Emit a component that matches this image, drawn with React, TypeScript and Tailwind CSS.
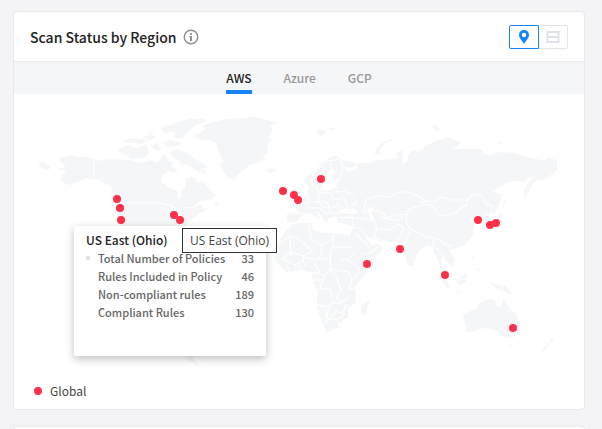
import { useState } from "react";

const tabs = ["AWS", "Azure", "GCP"];

const policyRows = [
  { label: "Total Number of Policies", value: 33 },
  { label: "Rules Included in Policy", value: 46 },
  { label: "Non-compliant rules", value: 189 },
  { label: "Compliant Rules", value: 130 },
];

const regions = [
  [117, 199], [120, 208], [121, 220], [174, 215], [180, 220],
  [283, 191], [294, 195], [298, 200], [321, 179], [367, 264],
  [400, 249], [445, 275], [478, 220], [490, 225], [496, 223], [513, 328],
];

const land = [
  // north america
  "M59 159L63 157L67 157L71 155L77 157L85 157L94 159L102 161L106 159L112 160L117 159L124 160L130 160L136 162L140 163L146 162L152 161L156 163L160 161L162 156L165 155L168 161L173 163L171 168L167 172L162 175L161 182L165 184L168 187L175 190L178 192L177 197L179 200L182 197L181 192L185 188L186 178L192 177L196 179L198 183L203 180L205 184L210 190L216 195L212 199L207 200L198 202L193 208L199 205L203 206L202 209L208 208L205 211L199 213L195 217L188 222L185 227L183 233L174 241L174 255L169 244L158 244L146 246L144 257L151 262L157 261L154 268L165 280L175 285L170 286L150 272L137 267L126 244L121 230L118 217L119 203L113 194L111 187L107 184L102 182L98 179L93 180L86 178L80 180L77 182L73 183L68 187L63 190L70 185L66 184L60 179L62 177L60 175L64 174L66 170L60 170L58 168L63 168L66 165L61 163Z",
  // south america
  "M175 285L188 281L200 289L207 297L224 306L220 326L208 334L201 345L197 352L193 363L187 358L185 325L174 310L171 297Z M192 357L197 364L201 367L195 365Z",
  // greenland
  "M193 137L201 132L206 129L202 126L212 122L220 121L226 119L242 118L256 117L266 120L280 123L271 125L272 131L269 137L271 141L267 146L268 153L262 157L266 159L257 163L250 165L242 171L237 175L234 180L229 178L224 173L220 165L223 160L219 153L217 144L210 140L202 140Z",
  "M266 170L269 168L277 169L275 172L270 173Z",
  // arctic archipelago
  "M170 126L177 122L190 119L204 119L207 121L196 125L188 132L182 138L173 138L176 133L170 131Z M161 128L166 125L173 126L172 131L165 133Z M147 133L154 131L151 134Z M142 138L150 134L156 137L151 140Z M118 151L122 147L129 145L136 148L146 145L149 153L144 158L131 159L126 155Z M122 142L131 138L140 139L147 140L142 144L132 143Z M151 146L157 143L161 148L158 152Z M162 142L170 140L181 143L179 146L167 146Z M171 152L177 149L183 151L189 154L195 159L202 163L208 167L203 169L207 174L200 173L193 168L188 165L181 165L179 160L173 158Z M166 169L173 167L178 171L172 173Z",
  "M39 162L45 163L51 168L47 170L40 167Z M214 205L216 202L220 205Z",
  // eurasia
  "M306 180L307 176L315 172L320 164L327 159L335 156L340 157L342 160L353 162L357 165L350 168L344 167L348 172L352 171L357 168L357 163L362 163L370 163L376 160L383 160L392 159L398 158L397 152L402 150L403 156L402 164L407 162L408 155L413 150L418 152L425 147L433 142L443 139L448 137L453 140L462 142L453 149L468 149L482 149L484 154L489 155L500 152L513 153L528 157L545 161L547 158L557 160L557 170L553 173L545 180L537 180L532 185L529 193L525 197L523 192L528 183L535 176L528 178L523 182L516 181L508 182L500 187L493 192L502 195L500 203L495 212L488 215L492 221L489 224L483 217L477 215L470 220L475 224L473 229L473 235L465 245L457 248L450 250L455 260L452 266L447 262L442 258L441 263L446 272L440 268L438 260L433 252L433 247L427 245L420 250L417 255L412 267L408 265L404 252L398 243L383 242L370 238L365 235L367 240L372 245L378 244L383 248L378 255L362 261L359 257L353 245L349 237L353 227L344 224L337 222L337 217L329 218L326 223L321 215L315 211L321 220L315 216L309 213L301 216L296 222L287 222L287 214L298 213L296 207L292 204L300 200L307 194L309 188L307 185Z",
  "M290 194L294 188L297 191L299 198L292 199Z M282 196L283 192L288 191L288 196Z",
  // africa
  "M293 224L302 223L312 223L313 230L323 233L332 233L348 235L355 248L363 262L370 262L367 273L358 283L355 287L356 302L348 308L348 317L343 320L338 328L327 332L324 327L317 308L317 298L318 292L313 283L312 273L302 270L287 272L277 263L274 257L278 250L277 245L285 232Z",
  "M361 306L370 299L367 309L365 316L361 314Z M413 267L415 268L414 271Z",
  // arctic islands
  "M315 131L323 129L326 132L321 137Z M326 129L335 128L335 130Z M374 153L379 145L387 140L396 139L384 144L380 149L380 155Z M432 126L436 125L441 130L435 131Z M444 132L448 133L445 134Z M497 142L506 142L499 144Z",
  // japan, philippines, indonesia
  "M497 218L500 213L503 215L500 222L493 227L492 224Z M504 196L505 201L503 213Z M473 254L474 258L472 262Z M479 267L480 270L477 271Z M439 273L444 277L450 286L448 289L442 281Z M450 290L461 291L459 292Z M456 280L462 277L467 272L466 283L459 285Z M471 282L473 285L470 284Z M489 282L495 284L505 286L510 291L513 295L503 291L497 289Z",
  // oceania
  "M463 315L468 312L476 309L480 303L484 300L491 299L496 301L495 305L501 307L504 298L507 305L511 309L517 315L519 323L516 330L514 337L507 338L500 335L498 331L493 329L482 328L475 331L467 332L465 324Z M508 344L512 345L510 347Z M550 337L554 339L550 344L546 349L541 352L545 346L550 342Z",
];

const borders = [
  "M94 159V180L101 182L109 193 M119 203H160L170 205L178 211L184 208L193 207 M126 244L145 251",
  // europe
  "M313 187L311 178L314 172L321 166L325 161L334 160L341 158 M331 177L325 184L321 190 M331 162L332 171L335 173L330 179L338 180 M341 160L343 168L340 178L338 185",
  "M338 185L336 192L344 191L353 195L356 203L350 207 M315 185L318 190L320 193L331 193L333 200L344 198L348 208 M307 193L309 202L319 202L322 207L333 208L340 203 M305 202L309 208L319 208L327 213 M319 193L318 201L328 203L330 211 M327 213L339 213L342 206 M298 213L307 214",
  // asia
  "M364 207L367 199L377 196L391 197L398 192L409 192L420 197L426 201L420 206L409 209L407 215L396 214L388 218L382 213L372 210L364 212Z M339 218L352 217L364 219 M352 217L353 227L362 229L366 236 M364 218L375 222L377 229L374 237L386 242 M381 217L388 219L397 221L403 217 M377 229L389 230L399 224L404 229L397 240 M407 215L406 223L411 229L408 237L403 249 M411 229L424 236L433 238L440 240L444 244 M420 202L426 201L434 202L442 197L451 200L467 200L467 204L455 213L445 216L437 213L433 206L425 204 M467 200L472 195L481 195L485 203L492 206L491 213L484 217 M433 240L434 247L441 252L445 260 M444 244L452 246L449 251L455 257 M362 254L372 252L378 247 M355 233L369 247",
  // africa
  "M277 245L290 236L297 238L313 251L303 256L290 252L283 259 M290 236L291 256 M309 225L311 239L321 245L333 239L334 234 M333 233V247L353 247 M333 247L329 259L316 259L303 257L305 267 M321 245L321 255L314 264L320 272L311 273 M314 272L324 276L331 269L330 259 M283 259L295 265L304 260 M287 265L289 272 M295 264L296 270 M299 263L300 270 M330 269L348 272L352 279L349 289 M331 270L337 278L341 290L336 298L342 302L349 297 M324 276L320 289H330L332 298 M317 305L329 306L333 302L341 304 M329 306L327 318L337 320L345 314 M326 323L336 311L343 313L346 304 M348 260L360 269L355 278 M340 260L348 259L354 253 M313 280L323 280 M349 289L356 288 M317 305L326 308L326 325",
  "M502 284V292 M458 280L466 279",
];

function InfoIcon() {
  return (
    <svg viewBox="0 0 16 16" className="h-4 w-4" fill="none" aria-hidden="true">
      <circle cx="8" cy="8" r="6.8" stroke="#8c8f94" strokeWidth="1.4" />
      <path d="M7 4h2v1.8H7zM6.5 7H9v5H7V8.2h-.5z" fill="#8c8f94" />
    </svg>
  );
}

function ViewToggle() {
  return (
    <div className="flex">
      <button
        type="button"
        aria-label="Map view"
        className="flex h-6 w-[30px] items-center justify-center rounded-l-xs border border-[#1685fc] text-[#1685fc]"
      >
        <svg viewBox="0 0 12 16" className="h-4 w-3" fill="currentColor" aria-hidden="true">
          <path
            fillRule="evenodd"
            d="M6 1C3.2 1 1 3.1 1 5.9c0 3.2 3 5.4 5 8.9 2-3.5 5-5.7 5-8.9C11 3.1 8.8 1 6 1zm0 2.8a2.2 2.2 0 1 1 0 4.4 2.2 2.2 0 0 1 0-4.4z"
          />
        </svg>
      </button>
      <button
        type="button"
        aria-label="List view"
        className="flex h-6 w-[29px] items-center justify-center rounded-r-xs border border-l-0 border-[#e2e4e8] text-[#dfe2e8]"
      >
        <svg viewBox="0 0 14 14" className="h-3.5 w-3.5" fill="none" aria-hidden="true">
          <path d="M1.5 2h11v10h-11zM1.5 7h11" stroke="currentColor" strokeWidth="2" />
        </svg>
      </button>
    </div>
  );
}

function WorldMap() {
  return (
    <svg viewBox="14 94 570 280" className="block w-full" role="img" aria-label="World map of scanned regions">
      <g fill="#f5f6f8">
        {land.map((d) => (
          <path key={d} d={d} />
        ))}
      </g>
      <g fill="none" stroke="#fff" strokeWidth="1.1" strokeLinejoin="round">
        {borders.map((d) => (
          <path key={d} d={d} />
        ))}
      </g>
      {/* inland seas */}
      <path
        fill="#fff"
        d="M340 213L344 208L349 209L354 208L359 213L350 214ZM367 207L374 208L372 213L375 221L370 219ZM328 183L334 178L338 180L335 188L327 191L320 189L326 181L328 171L333 170L331 177ZM337 323L340 322L341 325L338 326Z"
      />
      <g fill="#ff3048">
        {regions.map(([x, y]) => (
          <circle key={`${x}-${y}`} cx={x} cy={y} r="4" />
        ))}
      </g>
    </svg>
  );
}

function RegionPopup() {
  return (
    <div className="absolute left-[60px] top-[132px] h-[130px] w-48 rounded-xs bg-white px-3 pt-1 shadow-[0_3px_8px_rgba(0,0,0,0.25)]">
      <h3 className="text-xs font-medium leading-[19px] text-[#222]">US East (Ohio)</h3>
      <table className="w-full text-[11px] font-medium leading-[18px] text-[#666]">
        <tbody>
          {policyRows.map((row, i) => (
            <tr key={row.label}>
              <th scope="row" className="whitespace-nowrap p-0 text-left font-medium">
                <span className="flex items-center gap-2">
                  <span className={i === 0 ? "h-1 w-1 rounded-full bg-[#ddd]" : "h-1 w-1"} />
                  {row.label}
                </span>
              </th>
              <td className="p-0 text-right">{row.value}</td>
            </tr>
          ))}
        </tbody>
      </table>
      <div
        role="tooltip"
        className="absolute left-[108px] top-0.5 flex h-[25px] w-[95px] items-center justify-center whitespace-nowrap border border-[#333] bg-white font-['Open_Sans','Noto_Sans',sans-serif] text-xs text-[#444]"
      >
        US East (Ohio)
      </div>
    </div>
  );
}

export default function App() {
  const [active, setActive] = useState("AWS");

  return (
    <div className="flex min-h-screen flex-col gap-4 bg-[#f4f4f7] pl-[13px] pr-[17px] pt-[11px] font-['Noto_Sans_CJK_KR','Noto_Sans',sans-serif]">
      <section className="rounded border border-[#e9e9ed] bg-white">
        <header className="flex h-[50px] items-center justify-between border-b border-[#e9e9ed] px-4">
          <div className="flex items-center gap-1.5">
            <h2 className="text-sm font-medium leading-5 text-[#222]">Scan Status by Region</h2>
            <InfoIcon />
          </div>
          <ViewToggle />
        </header>
        <nav className="flex h-8 justify-center gap-8 bg-[#f5f6f8]">
          {tabs.map((tab) => (
            <button
              key={tab}
              type="button"
              onClick={() => setActive(tab)}
              className={
                tab === active
                  ? "border-b-4 border-[#1685fc] pt-1 text-xs font-medium leading-6 text-[#222]"
                  : "border-b-4 border-transparent pt-1 text-xs font-medium leading-6 text-[#999]"
              }
            >
              {tab}
            </button>
          ))}
        </nav>
        <div className="relative">
          <WorldMap />
          <RegionPopup />
        </div>
        <div className="flex items-center gap-2 pb-2 pl-5 pt-[7px] text-xs leading-5 text-[#444]">
          <span className="h-2 w-2 rounded-full bg-[#ff3048]" />
          Global
        </div>
      </section>
      <section className="grow rounded-t border border-b-0 border-[#e9e9ed] bg-white" />
    </div>
  );
}
